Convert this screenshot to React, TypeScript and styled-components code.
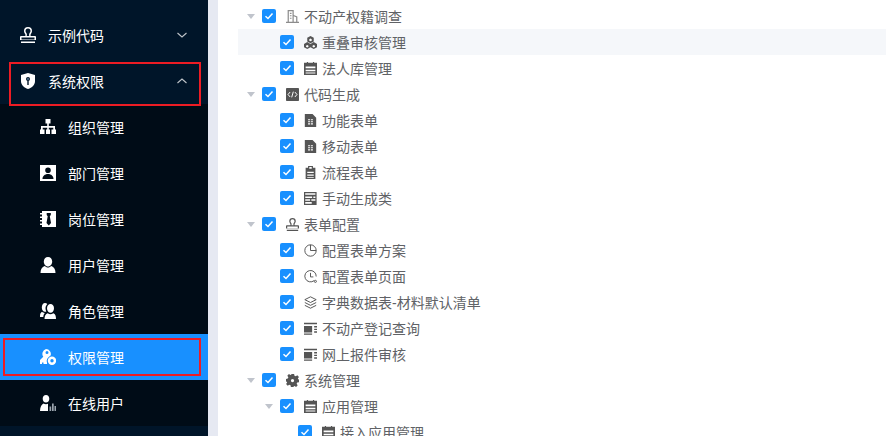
import React from 'react';
import styled, {createGlobalStyle} from 'styled-components';

const GlobalStyle = createGlobalStyle`
	html, body {
		margin: 0;
		padding: 0;
		height: 100%;
		overflow: hidden;
		background: #fff;
		font-family: "Liberation Sans", "Noto Sans CJK SC", sans-serif;
	}
`;

const Page = styled.div`
	display: flex;
	width: 886px;
	height: 436px;
	overflow: hidden;
`;

const Sidebar = styled.nav`
	flex: 0 0 208px;
	height: 436px;
	background: #001529;
	padding-top: 12px;
	box-sizing: border-box;
	overflow: hidden;
`;

const Strip = styled.div`
	flex: 0 0 10px;
	background: #e6e9f2;
`;

const TopItem = styled.div<{$marked?: boolean}>`
	position: relative;
	display: flex;
	align-items: center;
	height: 46px;
	padding-left: 20px;
	padding-right: 20px;
	color: #fff;
	font-size: 14px;
	${p => p.$marked && `
		&::after {
			content: '';
			position: absolute;
			left: 9px;
			top: 4px;
			width: 192px;
			height: 44px;
			border: 2px solid #ed1c24;
			box-sizing: border-box;
			z-index: 1;
		}
	`}
`;

const TopIcon = styled.span`
	display: flex;
	width: 16px;
	height: 16px;
	margin-right: 12px;
`;

const Chevron = styled.svg`
	margin-left: auto;
	width: 12px;
	height: 12px;
	color: rgba(255, 255, 255, 0.75);
`;

const SubMenu = styled.div`
	background: #000c17;
`;

const SubItem = styled.div<{$active?: boolean}>`
	position: relative;
	display: flex;
	align-items: center;
	height: 46px;
	padding-left: 40px;
	color: #fff;
	font-size: 14px;
	background: ${p => (p.$active ? '#1890ff' : 'transparent')};
	${p => p.$active && `
		&::after {
			content: '';
			position: absolute;
			left: 3px;
			top: 4px;
			width: 198px;
			height: 38px;
			border: 2px solid #ed1c24;
			box-sizing: border-box;
		}
	`}
`;

const SubIcon = styled.span`
	display: flex;
	width: 16px;
	height: 16px;
	margin-right: 12px;
`;

const Tree = styled.div`
	flex: 1;
	padding: 3px 0 0 20px;
	background: #fff;
	overflow: hidden;
`;

const Row = styled.div<{$hover?: boolean; $level: number}>`
	display: flex;
	align-items: center;
	height: 26px;
	padding-left: ${p => 9 + p.$level * 18}px;
	background: ${p => (p.$hover ? '#f5f7fa' : 'transparent')};
	color: #606266;
	font-size: 14px;
`;

const CaretSlot = styled.span`
	display: flex;
	width: 15px;
	align-items: center;
`;

const Caret = styled.span<{$show: boolean}>`
	width: 0;
	height: 0;
	border-style: solid;
	border-width: 5px 4px 0;
	border-color: ${p => (p.$show ? '#c0c4cc' : 'transparent')} transparent transparent;
`;

const Check = styled.span`
	display: flex;
	align-items: center;
	justify-content: center;
	width: 14px;
	height: 14px;
	border-radius: 2px;
	background: #1890ff;
	margin-right: 10px;
`;

const NodeIcon = styled.span`
	display: flex;
	width: 13px;
	height: 13px;
	margin-right: 5px;
	color: #555;
`;

const Sprite = styled.svg`
	width: 100%;
	height: 100%;
	fill: currentColor;
`;

const icon = (d: React.ReactNode) => <Sprite viewBox="0 0 16 16">{d}</Sprite>;

const stamp = icon(<path fillRule="evenodd" d="M8 0a4 4 0 0 1 4 4c0 1.500-1 2.400-1.400 3.400-.2.500-.1 1 .1 1.600H15a1 1 0 0 1 1 1v3H0v-3a1 1 0 0 1 1-1h4.300c.2-.6.3-1.100.1-1.600C5 6.400 4 5.500 4 4a4 4 0 0 1 4-4zm0 1.500A2.500 2.500 0 0 0 5.500 4c0 1 .9 1.800 1.300 2.900.2.700.2 1.400-.1 2.100h2.600c-.3-.7-.3-1.400-.1-2.100.4-1.100 1.300-1.900 1.300-2.900A2.500 2.500 0 0 0 8 1.500zM1.500 10.500v2h13v-2zM1 14.500h14V16H1z" />);
const shield = (
	<Sprite viewBox="0 0 16 16">
		<path d="M8 0l7 2v6c0 4-3 6.700-7 8-4-1.300-7-4-7-8V2z" />
		<circle cx="8" cy="6" r="2" fill="#001529" />
		<circle cx="8" cy="6" r=".8" fill="#8ab4d8" />
		<path d="M7.300 7.500h1.400V12H7.300z" fill="#001529" />
	</Sprite>
);
const org = icon(<path d="M5.500 0h5v4.500H8.800V7H15v3.500h1V15h-4.500v-4.500H13.300V8.700H8.800v1.800H10V15H6v-4.500h1.200V8.700H2.700v1.800H4.500V15H0v-4.500h1V7h6.200V4.500H5.500z" />);
const badge = icon(<path fillRule="evenodd" d="M0 0h16v16H0zm8 2.500a2.800 2.800 0 1 0 0 5.600 2.800 2.800 0 0 0 0-5.600zM2.500 14h11c0-2.800-2.200-5-5.500-5s-5.500 2.200-5.500 5z" />);
const post = icon(<path fillRule="evenodd" d="M2 0h14v16H2v-2H0v-1.500h2v-2H0V9h2V7H0V5.500h2v-2H0V2h2zm4.700 2v2l1 1.200L6.500 12l2.300 2.500L11 12 9.800 5.200l1-1.200V2z" />);
const user = icon(<path d="M8 0c2.500 0 4.200 2 4.200 4.500S10.500 9.500 8 9.500 3.800 7 3.800 4.500 5.500 0 8 0zM.5 16c0-3.500 1.500-5.800 4.200-6.900C5.600 10 6.800 10.600 8 10.600s2.400-.6 3.300-1.500c2.700 1.100 4.200 3.400 4.200 6.900z" />);
const role = icon(<path d="M10.500 1c2 0 3.500 1.800 3.500 4.200S12.500 9.800 10.500 9.800 7 7.600 7 5.200 8.500 1 10.500 1zM5 0c.9 0 1.700.3 2.300.9C6.200 2 5.500 3.500 5.500 5.300c0 1.100.3 2.200.8 3.100-.4.200-.8.300-1.300.3C3.200 8.700 1.800 6.800 1.800 4.400S3.200 0 5 0zM0 13c0-2.200.8-3.600 2-4.300.7.700 1.700 1.200 2.800 1.200C3.800 11 3.300 12.400 3.300 14H0zM4.500 16c0-3 1.100-5 3.200-5.800.8.700 1.800 1.100 2.800 1.100s2-.4 2.800-1.100c2.100.8 2.700 2.800 2.700 5.800z" />);
const perm = icon(<path fillRule="evenodd" d="M6 0a5 5 0 0 1 4.600 6.600L8.700 8A5 5 0 0 0 7 13.500V15H3.500v-1.500H2V15H0v-4l3.300-3.300A5 5 0 0 1 6 0zm1 2a1.500 1.500 0 1 0 0 3 1.500 1.500 0 0 0 0-3zM12 7.500a4.200 4.200 0 1 1 0 8.400 4.200 4.200 0 0 1 0-8.400zm0 2.500a1.700 1.700 0 1 0 0 3.400 1.700 1.700 0 0 0 0-3.400z" />);
const online = (
	<Sprite viewBox="0 0 16 16">
		<path d="M6 0c2 0 3.300 1.600 3.300 3.700S8 7.500 6 7.500 2.700 5.800 2.700 3.700 4 0 6 0zM0 16c0-4 1.700-6.600 3.500-7.500.7.500 1.600.8 2.500.8.800 0 1.400-.2 2-.5V16z" />
		<path d="M9.500 11.500h1.700V16H9.500zM12 8.500h1.700V16H12zM14.500 11H16v5h-1.500z" fill="#9aa4ad" />
	</Sprite>
);

const building = icon(<path fillRule="evenodd" d="M2 0h7.500v6l4.500 2v6.500h2V16H0v-1.500h2zm1.500 1.500v13H8v-13zm6 6.300v6.700h3V9zM4.800 3.500h2v1.300h-2zm0 3h2v1.300h-2zm0 3h2v1.300h-2z" fill="#8c8c8c" />);
const cubes = (
	<Sprite viewBox="0 0 16 16">
		<path d="M8 0l4 2.300v4.400L8 9 4 6.700V2.300zM4 7.500l4 2.300v4L4 16 0 13.800v-4zM12 7.500l4 2.300v4L12 16l-4-2.200v-4z" />
		<path d="M8 3.200l1.500.9v1.700L8 6.600l-1.500-.8V4.100zM4 11l1.500.9v1.400L4 14l-1.500-.7v-1.400zM12 11l1.500.9v1.400L12 14l-1.500-.7v-1.400z" fill="#fff" />
	</Sprite>
);
const calendar = icon(<path fillRule="evenodd" d="M0 1h3.500V0H5v1h6V0h1.500v1H16v15H0zm2 4.500v2.200h12V5.500zm0 4v1.800h12V9.500zM2 13v1h12v-1z" />);
const code = (
	<Sprite viewBox="0 0 16 16">
		<rect x="0" y="0" width="16" height="16" rx="1" />
		<path d="M5 5L2.500 8 5 11M11 5l2.500 3L11 11M9 4.500L7 11.500" fill="none" stroke="#fff" strokeWidth="1.200" />
	</Sprite>
);
const sheet = icon(<path fillRule="evenodd" d="M1 0h9.500L15 4.500V16H1zm4 6.500v1.300h2.500V6.500zm3.500 0v1.300H11V6.500zM5 9v1.300h2.500V9zm3.500 0v1.300H11V9zM5 11.500v1.300h2.500v-1.300zm3.500 0v1.300H11v-1.300z" />);
const clip = icon(<path fillRule="evenodd" d="M5 0h6v2h3v14H2V2h3zm1.500 1.300v2h3v-2zM4 7v1.500h8V7zm0 3.500V12h8v-1.500zM4 13.500V14.500h8v-1z" />);
const form = icon(<path fillRule="evenodd" d="M0 0h15.500v16H0zm1.500 1.500v2h12.500v-2zm0 4V7.500H10v-2zm0 3.500v1.700h6V9zm0 3.200v2.300h8v-2.300zM11.500 5.500V7.500h2.500v-2zM9 9v1.700h5V9z" />);
const pie = icon(
	<g fill="none" stroke="currentColor" strokeWidth="1.200">
		<circle cx="8" cy="8" r="7" />
		<path d="M8 1v7h7" />
	</g>
);
const clock = icon(
	<g fill="none" stroke="currentColor" strokeWidth="1.200">
		<path d="M12.500 13A7 7 0 1 1 15 8" />
		<path d="M8 3.500V8.500h3.500" />
		<circle cx="14" cy="14" r="1.300" />
	</g>
);
const layers = icon(
	<g fill="none" stroke="currentColor" strokeWidth="1.200">
		<path d="M8 1l7 3.500L8 8 1 4.500z" />
		<path d="M1 8l7 3.500L15 8" />
		<path d="M1 11.500L8 15l7-3.500" />
	</g>
);
const panel = icon(<path d="M0 1h16v1.700H0zM0 5h10v8H0zM0 14h10v1.700H0zM12.500 5H16v1.700h-3.500zM12.500 8.200H16v1.700h-3.500zM12.500 11.500H16v1.700h-3.500z" />);
const gear = icon(<path fillRule="evenodd" d="M6 0h4l.4 2.200 1.600.7 1.900-1.300 2 2.100-1.300 1.900.7 1.600L16 6v4l-2.200.4-.7 1.600 1.300 1.900-2 2.100-1.900-1.300-1.600.7L10 16H6l-.4-2.200-1.600-.7-1.900 1.300-2-2.100 1.300-1.900-.7-1.600L0 10V6l2.200-.4.700-1.600-1.300-1.900 2-2.100L5.500 1.300 7 .6zM8 6a2 2 0 1 0 0 4 2 2 0 0 0 0-4z" />);

const subItems = [
	{label: '组织管理', icon: org},
	{label: '部门管理', icon: badge},
	{label: '岗位管理', icon: post},
	{label: '用户管理', icon: user},
	{label: '角色管理', icon: role},
	{label: '权限管理', icon: perm, active: true},
	{label: '在线用户', icon: online},
];

const treeRows = [
	{level: 0, label: '不动产权籍调查', icon: building, caret: true},
	{level: 1, label: '重叠审核管理', icon: cubes, hover: true},
	{level: 1, label: '法人库管理', icon: calendar},
	{level: 0, label: '代码生成', icon: code, caret: true},
	{level: 1, label: '功能表单', icon: sheet},
	{level: 1, label: '移动表单', icon: sheet},
	{level: 1, label: '流程表单', icon: clip},
	{level: 1, label: '手动生成类', icon: form},
	{level: 0, label: '表单配置', icon: stamp, caret: true},
	{level: 1, label: '配置表单方案', icon: pie},
	{level: 1, label: '配置表单页面', icon: clock},
	{level: 1, label: '字典数据表-材料默认清单', icon: layers},
	{level: 1, label: '不动产登记查询', icon: panel},
	{level: 1, label: '网上报件审核', icon: panel},
	{level: 0, label: '系统管理', icon: gear, caret: true},
	{level: 1, label: '应用管理', icon: calendar, caret: true},
	{level: 2, label: '接入应用管理', icon: calendar},
];

const App = () => {
	return (
		<Page>
			<GlobalStyle />
			<Sidebar>
				<TopItem>
					<TopIcon>{stamp}</TopIcon>
					示例代码
					<Chevron viewBox="0 0 12 12" fill="none" stroke="currentColor" strokeWidth="1.100">
						<path d="M1.500 4L6 8 10.500 4" />
					</Chevron>
				</TopItem>
				<TopItem $marked>
					<TopIcon>{shield}</TopIcon>
					系统权限
					<Chevron viewBox="0 0 12 12" fill="none" stroke="currentColor" strokeWidth="1.100">
						<path d="M1.500 8L6 4 10.500 8" />
					</Chevron>
				</TopItem>
				<SubMenu>
					{subItems.map(s => (
						<SubItem key={s.label} $active={s.active}>
							<SubIcon>{s.icon}</SubIcon>
							{s.label}
						</SubItem>
					))}
				</SubMenu>
			</Sidebar>
			<Strip />
			<Tree>
				{treeRows.map(r => (
					<Row key={r.label} $level={r.level} $hover={r.hover}>
						<CaretSlot>
							<Caret $show={!!r.caret} />
						</CaretSlot>
						<Check>
							<svg width="10" height="10" viewBox="0 0 10 10" fill="none" stroke="#fff" strokeWidth="1.500">
								<path d="M1.500 5.200L4 7.500 8.500 2.500" />
							</svg>
						</Check>
						<NodeIcon>{r.icon}</NodeIcon>
						{r.label}
					</Row>
				))}
			</Tree>
		</Page>
	);
};

export default App;
